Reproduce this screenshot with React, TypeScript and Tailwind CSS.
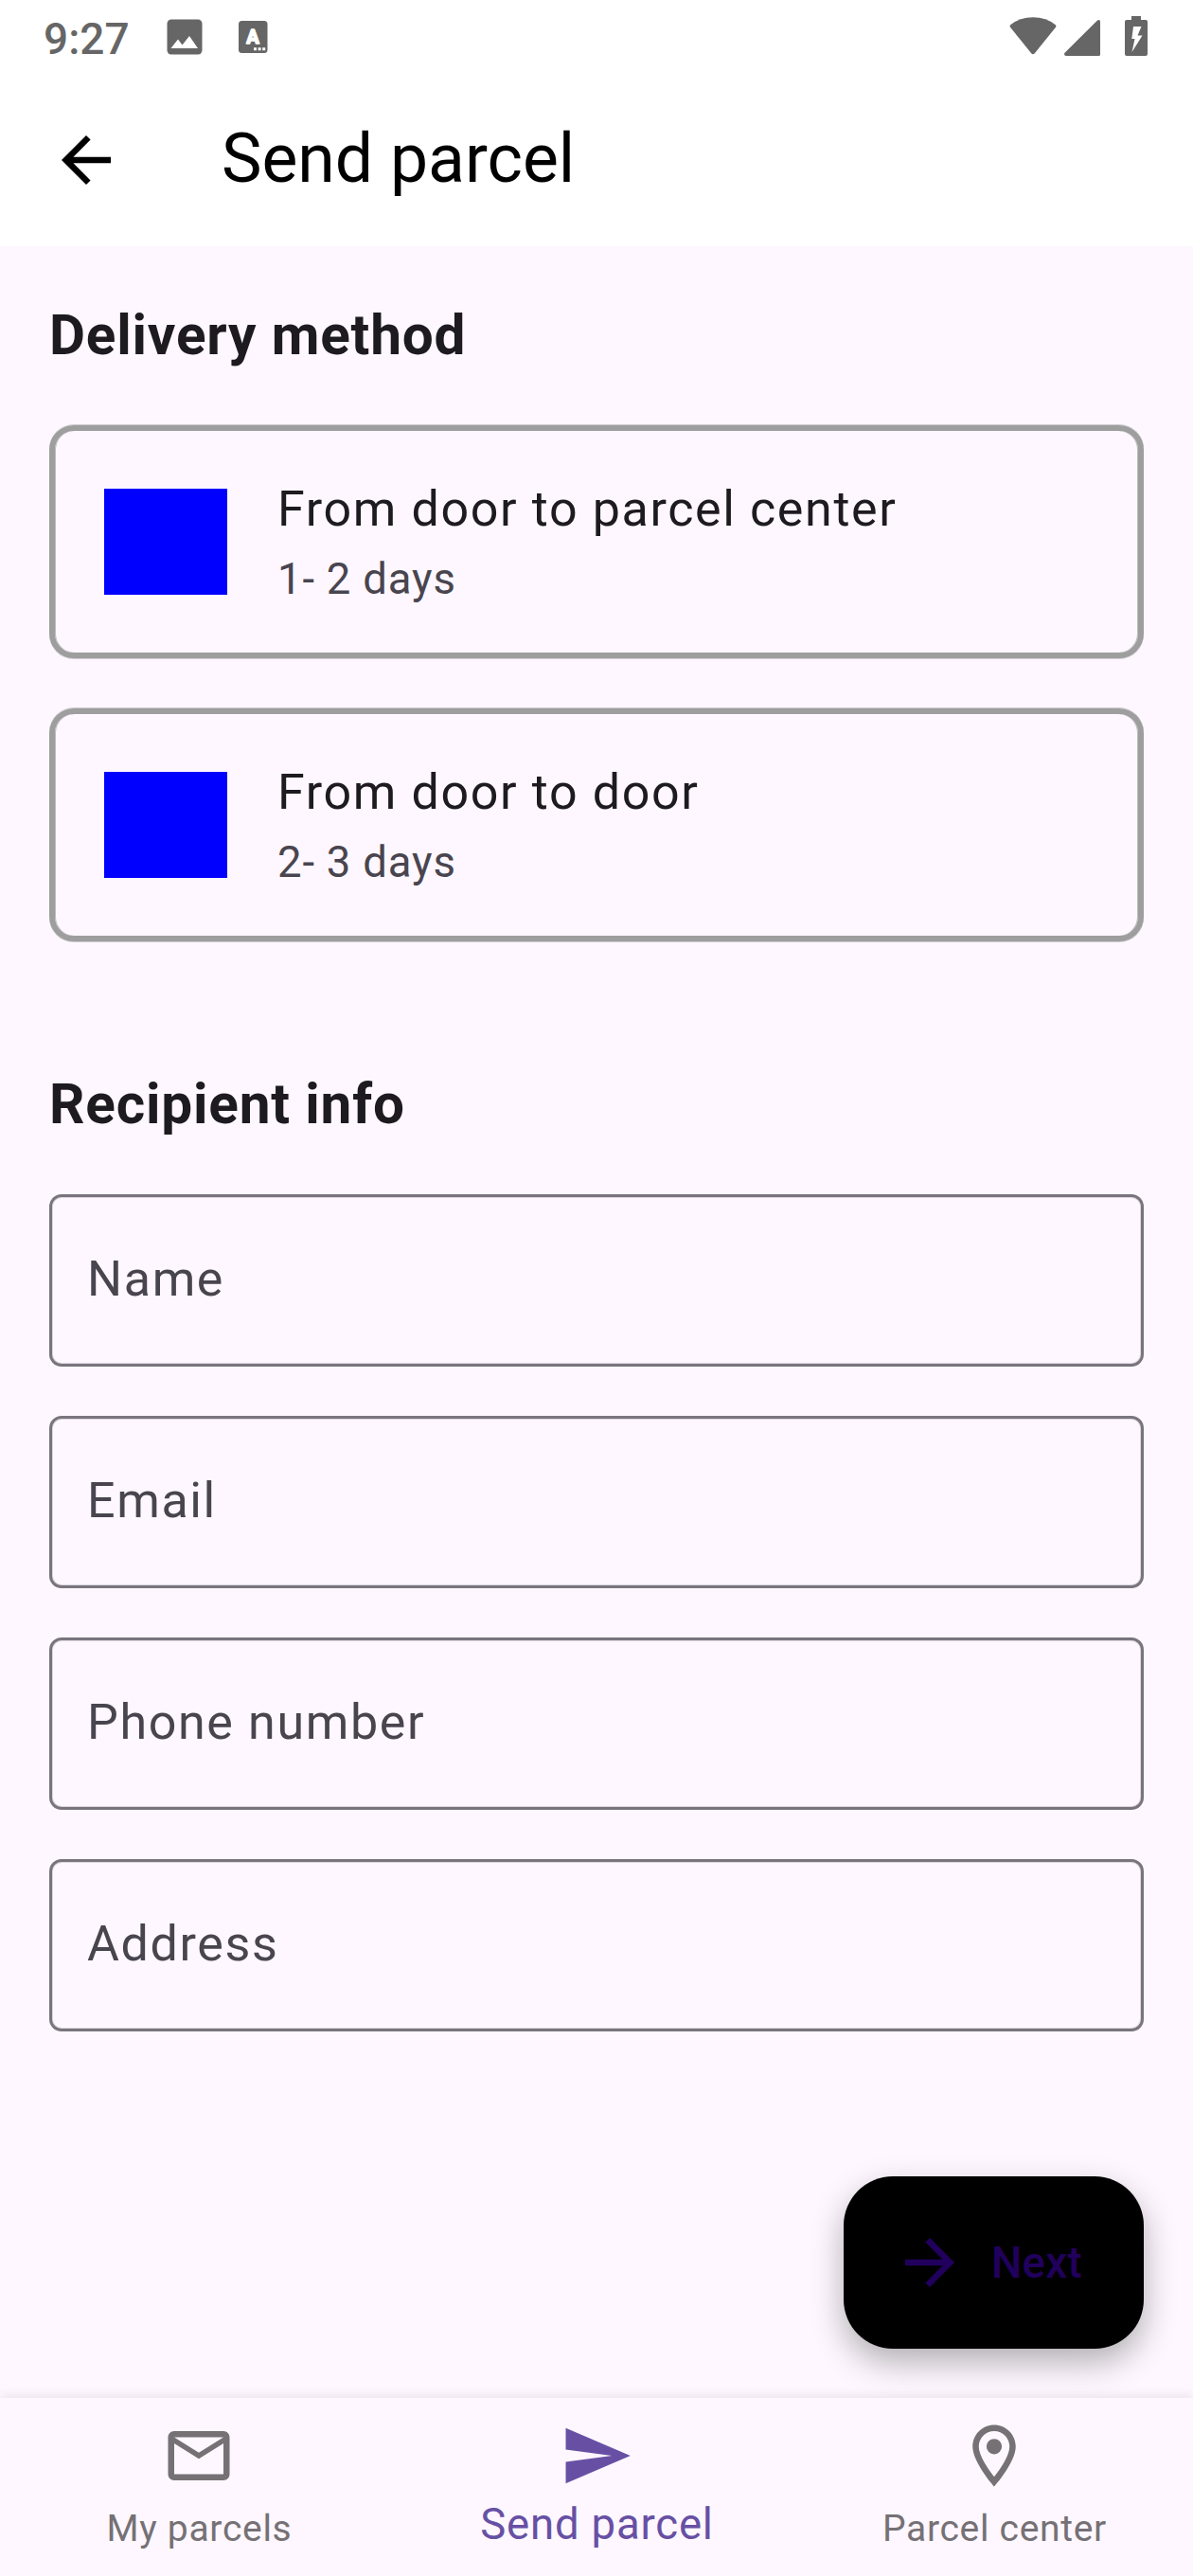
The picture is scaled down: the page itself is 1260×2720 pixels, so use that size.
import React from "react";

type IconProps = { path: string; className?: string };

function Icon({ path, className = "" }: IconProps) {
  return (
    <svg viewBox="0 0 24 24" fill="currentColor" className={`size-[78px] shrink-0 ${className}`}>
      <path d={path} />
    </svg>
  );
}

const ICONS = {
  back: "M20 11H7.83l5.59-5.59L12 4l-8 8 8 8 1.41-1.41L7.83 13H20v-2z",
  forward: "M12 4l-1.41 1.41L16.17 11H4v2h12.17l-5.58 5.59L12 20l8-8z",
  mail: "M22 6c0-1.1-.9-2-2-2H4c-1.1 0-2 .9-2 2v12c0 1.1.9 2 2 2h16c1.1 0 2-.9 2-2V6zm-2 0l-8 5-8-5h16zm0 12H4V8l8 5 8-5v10z",
  send: "M2.01 21L23 12 2.01 3v7L17 12 2.01 14z",
  place:
    "M12 2C8.13 2 5 5.13 5 9c0 5.25 7 13 7 13s7-7.75 7-13c0-3.87-3.13-7-7-7zM7 9c0-2.76 2.24-5 5-5s5 2.24 5 5c0 2.88-2.88 7.19-5 9.88C9.92 16.21 7 11.85 7 9z M14.5 9a2.5 2.5 0 1 1-5 0 2.5 2.5 0 0 1 5 0z",
};

function StatusBar() {
  return (
    <div className="flex h-[78px] items-start bg-white text-[#666666]">
      <span className="ml-[46px] mt-[13px] w-[130px] text-[46px] font-medium leading-[56px]">
        9:27
      </span>
      <svg viewBox="0 0 38 38" className="mt-5 size-[38px]">
        <rect x="0.5" y="0.5" width="37" height="37" rx="4.5" fill="#666666" />
        <path d="M4.5 31 L12 21.5 L16.5 27.5 L24 18 L33 31 Z" fill="#ffffff" />
      </svg>
      <svg viewBox="0 0 31 34" className="ml-[38px] mt-[22px] h-[34px] w-[31px]">
        <rect width="30.5" height="34" rx="3.5" fill="#666666" />
        <text
          x="15"
          y="23.8"
          textAnchor="middle"
          fontSize="20"
          fontWeight="700"
          fill="#ffffff"
          stroke="#ffffff"
          strokeWidth="1.6"
          strokeLinejoin="round"
        >
          A
        </text>
        <path d="M16 28.3h3v3h-3z M20.6 28.3h3v3h-3z M25.2 28.3h3v3h-3z" fill="#ffffff" />
      </svg>
      <div className="grow" />
      <svg viewBox="0 0 50 40" className="mr-[8px] mt-[18px] h-10 w-[50px]" fill="currentColor">
        <path d="M1.2 8.2 Q11 0.2 25 0.2 Q39 0.2 48.8 8.2 Q50 9.4 49 10.8 L26.8 38.3 Q25 40.4 23.2 38.3 L1 10.8 Q0 9.4 1.2 8.2Z" />
      </svg>
      <svg viewBox="0 0 38 38" className="mr-[26px] mt-[21px] size-[38px]" fill="currentColor">
        <path d="M34.8 0.8 Q35.8 0 36.5 0 Q38 0 38 1.5 V36.5 Q38 38 36.5 38 H2 Q0 38 0 36 Q0 35.4 0.8 34.6Z" />
      </svg>
      <svg viewBox="0 0 24 42" className="mr-12 mt-[17px] h-[42px] w-6">
        <path
          d="M7 0H17V4H22Q24 4 24 6V40Q24 42 22 42H2Q0 42 0 40V6Q0 4 2 4H7Z"
          fill="#666666"
        />
        <path d="M9 11H17.5L13.5 20.5H18.5L7.5 38L10.5 24H7.3Z" fill="#ffffff" />
      </svg>
    </div>
  );
}

function AppBar() {
  return (
    <header className="flex h-[182px] items-center bg-white pl-[52px] text-black">
      <Icon path={ICONS.back} />
      <h1 className="-mt-[3px] ml-[104px] text-[71.5px] leading-[90px]">Send parcel</h1>
    </header>
  );
}

function SectionTitle({ children }: { children: React.ReactNode }) {
  return (
    <h2 className="text-[58.5px] font-bold leading-[78px] tracking-[0.8125px] text-[#1D1B20]">
      {children}
    </h2>
  );
}

function MethodCard({ title, subtitle }: { title: string; subtitle: string }) {
  return (
    <div className="flex h-[246px] items-center gap-[53px] rounded-[26px] border-[6px] border-[#9E9E9E] px-[52px] shadow-[0_-1px_0_#cecbcf,0_1px_0_#cecbcf,inset_1px_0_0_#bdbbbe,inset_-1px_0_0_#bdbbbe]">
      <div className="h-28 w-[130px] bg-[#0000FF]" />
      <div className="flex flex-col pt-0.5">
        <span className="text-[52px] leading-[78px] tracking-[1.625px] text-[#1D1B20]">{title}</span>
        <span className="text-[45.5px] leading-[70px] tracking-[0.8125px] text-[#49454F]">
          {subtitle}
        </span>
      </div>
    </div>
  );
}

function Field({ label }: { label: string }) {
  return (
    <label className="flex h-[182px] items-center rounded-[13px] border-[3px] border-[#79747E] pb-0.5 pl-[37px] text-[52px] leading-[78px] tracking-[1.625px] text-[#49454F] shadow-[inset_0_0_0_1px_#ddd7df]">
      {label}
    </label>
  );
}

function NavItem({ path, label, active = false }: { path: string; label: string; active?: boolean }) {
  return (
    <div
      className={`flex flex-1 flex-col items-center pt-[22px] ${active ? "text-[#6750A4]" : "text-[#757175]"}`}
    >
      <Icon path={path} />
      <span
        className={
          active
            ? "mt-[1px] pl-px text-[45.5px] leading-[65px] tracking-[0.8125px]"
            : "mt-[6px] pl-px text-[39px] leading-[65px] tracking-[0.7px]"
        }
      >
        {label}
      </span>
    </div>
  );
}

export default function App() {
  return (
    <div className="flex h-[2720px] w-[1260px] flex-col overflow-hidden bg-[#FEF7FF] font-['Roboto',sans-serif]">
      <StatusBar />
      <AppBar />
      <main className="flex grow flex-col px-[52px] pt-[55px]">
        <SectionTitle>Delivery method</SectionTitle>
        <div className="mt-14 flex flex-col gap-[53px]">
          <MethodCard title="From door to parcel center" subtitle="1- 2 days" />
          <MethodCard title="From door to door" subtitle="2- 3 days" />
        </div>
        <div className="mt-[133px]">
          <SectionTitle>Recipient info</SectionTitle>
        </div>
        <div className="mt-14 flex flex-col gap-[52px]">
          <Field label="Name" />
          <Field label="Email" />
          <Field label="Phone number" />
          <Field label="Address" />
        </div>
        <button className="mt-[153px] flex h-[182px] w-[317px] shrink-0 items-center self-end rounded-[52px] bg-black pl-[52px] text-[#21005D] shadow-[0_14px_34px_rgba(0,0,0,0.3)]">
          <Icon path={ICONS.forward} />
          <span className="ml-[26px] text-[45.5px] font-medium leading-[65px] tracking-[0.325px]">
            Next
          </span>
        </button>
      </main>
      <nav className="relative flex h-[188px] shrink-0 bg-[#FEF7FF] shadow-[0_-3px_10px_rgba(0,0,0,0.08)]">
        <NavItem path={ICONS.mail} label="My parcels" />
        <NavItem path={ICONS.send} label="Send parcel" active />
        <NavItem path={ICONS.place} label="Parcel center" />
      </nav>
    </div>
  );
}
